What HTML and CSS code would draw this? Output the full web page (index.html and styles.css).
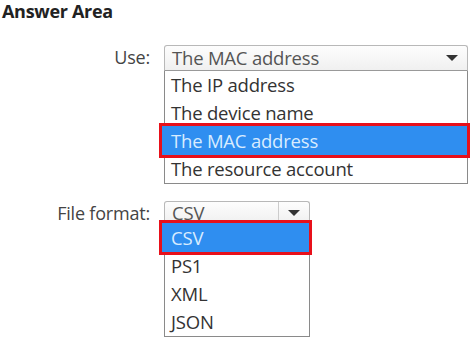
FILE: index.html
```html
<!DOCTYPE html>
<html lang="en">
<head>
    <meta charset="UTF-8">
    <title>Answer Area</title>
    <link rel="stylesheet" href="styles.css">
</head>
<body>
<div class="answer">
    <h3 class="title">Answer Area</h3>

    <div class="field">
        <div class="label">Use:</div>
        <div class="dropdown wide">
            <div class="head">
                <span class="value">The MAC address</span>
                <span class="arrow"></span>
            </div>
            <ul class="list">
                <li>The IP address</li>
                <li>The device name</li>
                <li class="picked">The MAC address</li>
                <li>The resource account</li>
            </ul>
        </div>
    </div>

    <div class="field">
        <div class="label">File format:</div>
        <div class="dropdown narrow">
            <div class="head short">
                <span class="value">CSV</span>
                <span class="arrow split"></span>
            </div>
            <ul class="list">
                <li class="picked">CSV</li>
                <li>PS1</li>
                <li>XML</li>
                <li>JSON</li>
            </ul>
        </div>
    </div>
</div>
</body>
</html>
```

FILE: styles.css
```css
body {
    margin: 0;
    background: #fff;
    font-family: "Open Sans", "Noto Sans", Arial, sans-serif;
    color: #333;
}

.answer {
    display: flex;
    flex-direction: column;
    padding: 1px 0 0 0;
}

.title {
    margin: 0;
    padding-left: 2px;
    font-size: 18px;
    font-weight: 700;
    line-height: 20px;
    color: #222;
    letter-spacing: -0.3px;
}

.field {
    display: flex;
    align-items: flex-start;
    margin-top: 24px;
}

.field + .field {
    margin-top: 17px;
}

.label {
    width: 150px;
    text-align: right;
    font-size: 18px;
    line-height: 25px;
    color: #444;
    padding-right: 14px;
    letter-spacing: -0.2px;
}

.dropdown {
    display: flex;
    flex-direction: column;
}

.wide {
    width: 304px;
}

.narrow {
    width: 146px;
}

.head {
    display: flex;
    align-items: center;
    height: 24px;
    border: 1px solid #b8b8b8;
    border-bottom-color: #999;
    border-radius: 3px 3px 0 0;
    background: linear-gradient(#fdfdfd, #f0f0f0);
}

.head.short {
    height: 21px;
}

.value {
    flex: 1;
    padding-left: 7px;
    font-size: 18.5px;
    color: #555;
    line-height: 20px;
    letter-spacing: -0.2px;
}

.arrow {
    width: 30px;
    height: 100%;
    display: flex;
    align-items: center;
    justify-content: center;
}

.arrow::after {
    content: "";
    border-left: 6px solid transparent;
    border-right: 6px solid transparent;
    border-top: 6px solid #333;
}

.arrow.split {
    border-left: 1px solid #ccc;
}

.list {
    list-style: none;
    margin: 0;
    padding: 0;
    border: 1px solid #8a8a8a;
    border-top: none;
}

.list li {
    height: 28px;
    line-height: 28px;
    padding-left: 6px;
    font-size: 18.5px;
    color: #333;
    letter-spacing: -0.2px;
}

.list li.picked {
    margin: -4px -3px -3px -6px;
    padding-left: 9px;
    height: 29px;
    line-height: 29px;
    border: 3px solid #e8101a;
    background: #2f8ef0;
    color: #d8ecff;
}
```
